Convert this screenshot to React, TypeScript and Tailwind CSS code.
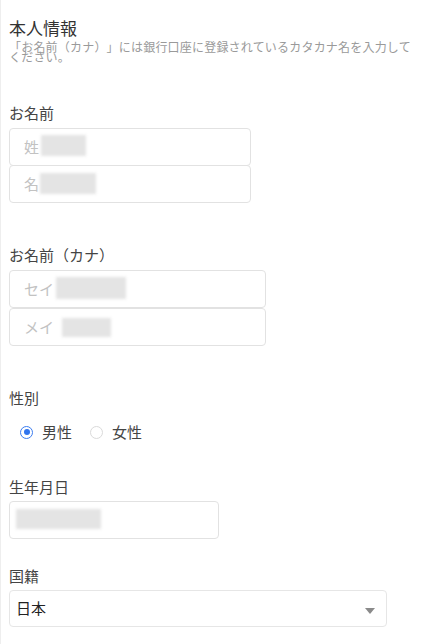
import React from 'react';

const FONT = '"Noto Sans CJK JP", "Noto Sans", sans-serif';

function Blur({ w, h, className = '' }: { w: number; h: number; className?: string }) {
  return (
    <span
      className={`inline-block bg-[#e4e4e4] blur-[1.5px] ${className}`}
      style={{ width: w, height: h }}
    />
  );
}

function Label({ children, className = '' }: { children: React.ReactNode; className?: string }) {
  return <div className={`text-[15px] leading-[20px] text-[#444] ${className}`}>{children}</div>;
}

function Radio({ checked, label }: { checked: boolean; label: string }) {
  return (
    <label className="flex items-center gap-[9px]">
      <span
        className={`flex h-[13px] w-[13px] items-center justify-center rounded-full border ${
          checked ? 'border-[#3b7cf0]' : 'border-[#dadada]'
        }`}
      >
        {checked && <span className="h-[6px] w-[6px] rounded-full bg-[#2f74ee]" />}
      </span>
      <span className="text-[15px] leading-[20px] text-[#444]">{label}</span>
    </label>
  );
}

const box = 'flex h-[38px] items-center rounded-[4px] border border-[#e2e2e2] bg-white pl-[14px] text-[15px] text-[#c2c2c2]';

export default function App() {
  return (
    <div className="min-h-[644px] border-l border-[#eeeeee] bg-white pl-[8px] pr-[9px]" style={{ fontFamily: FONT }}>
      <h1 className="pt-[16px] text-[17px] font-normal leading-[24px] text-[#333]">本人情報</h1>
      <p className="mt-[2px] text-[12px] leading-[10px] tracking-[0.2px] text-[#9a9a9a] [text-spacing-trim:space-all]">
        「お名前（カナ）」には銀行口座に登録されているカタカナ名を入力してください。
      </p>

      <Label className="mt-[41px]">お名前</Label>
      <div className="mt-[5px] flex flex-col">
        <div className={`${box} w-[242px]`}>
          <span>姓</span>
          <Blur w={45} h={21} className="-mt-[3px] ml-[2px]" />
        </div>
        <div className={`${box} -mt-px w-[242px]`}>
          <span>名</span>
          <Blur w={56} h={21} className="-mt-[2px] ml-[1px]" />
        </div>
      </div>

      <Label className="mt-[42px]">お名前（カナ）</Label>
      <div className="mt-[5px] flex flex-col">
        <div className={`${box} w-[257px]`}>
          <span>セイ</span>
          <Blur w={70} h={22} className="-mt-[2px] ml-[2px]" />
        </div>
        <div className={`${box} w-[257px]`}>
          <span>メイ</span>
          <Blur w={49} h={19} className="ml-[8px]" />
        </div>
      </div>

      <Label className="mt-[42px]">性別</Label>
      <div className="ml-[11px] mt-[12px] flex h-[24px] items-center gap-[18px]">
        <Radio checked label="男性" />
        <Radio checked={false} label="女性" />
      </div>

      <Label className="mt-[33px]">生年月日</Label>
      <div className="mt-[4px] flex h-[38px] w-[210px] items-center rounded-[4px] border border-[#e2e2e2] pl-[6px]">
        <Blur w={85} h={20} className="-mt-[3px]" />
      </div>

      <Label className="mt-[27px]">国籍</Label>
      <div className="mt-[4px] flex h-[37px] w-[378px] items-center justify-between rounded-[4px] border border-[#e6e6e6] pl-[6px] pr-[11px]">
        <span className="text-[15px] text-[#222]">日本</span>
        <svg width="10" height="6" viewBox="0 0 10 6" className="mt-[4px]">
          <path d="M0 0 H10 L5 6 Z" fill="#8a8a8a" />
        </svg>
      </div>
    </div>
  );
}
